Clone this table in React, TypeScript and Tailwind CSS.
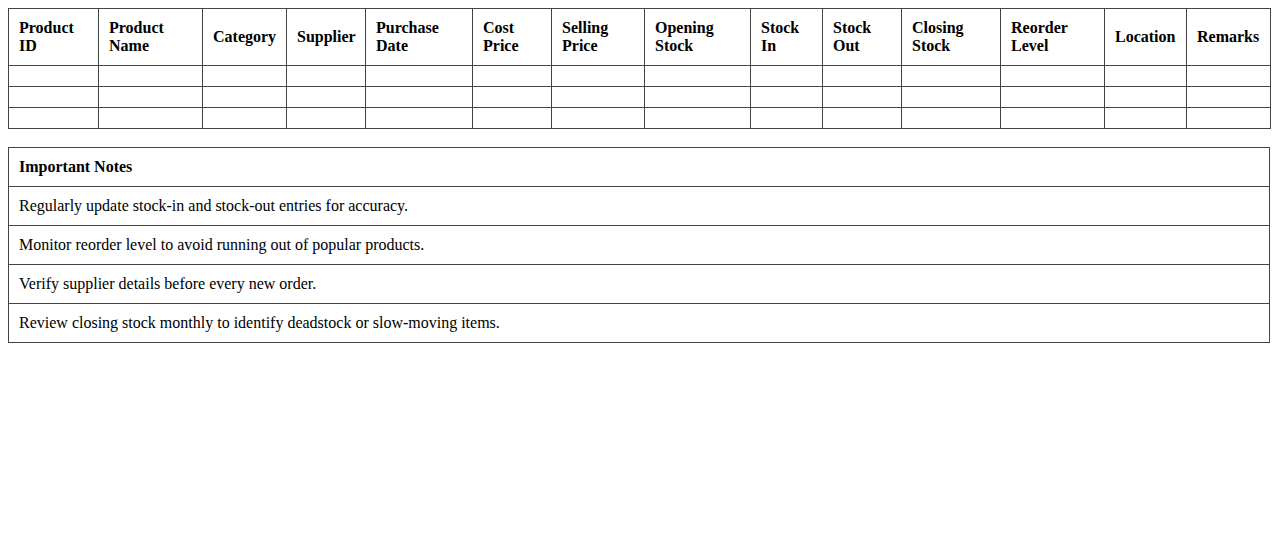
const headers = [
  { label: ["Product", "ID"], w: "w-[90px]" },
  { label: ["Product", "Name"], w: "w-[104px]" },
  { label: ["Category"], w: "w-[84px]" },
  { label: ["Supplier"], w: "w-[79px]" },
  { label: ["Purchase", "Date"], w: "w-[107px]" },
  { label: ["Cost", "Price"], w: "w-[79px]" },
  { label: ["Selling", "Price"], w: "w-[93px]" },
  { label: ["Opening", "Stock"], w: "w-[106px]" },
  { label: ["Stock", "In"], w: "w-[72px]" },
  { label: ["Stock", "Out"], w: "w-[79px]" },
  { label: ["Closing", "Stock"], w: "w-[99px]" },
  { label: ["Reorder", "Level"], w: "w-[104px]" },
  { label: ["Location"], w: "w-[82px]" },
  { label: ["Remarks"], w: "w-[84px]" },
];

const notes = [
  "Regularly update stock-in and stock-out entries for accuracy.",
  "Monitor reorder level to avoid running out of popular products.",
  "Verify supplier details before every new order.",
  "Review closing stock monthly to identify deadstock or slow-moving items.",
];

export default function App() {
  return (
    <div className="min-h-[550px] bg-white p-2 font-['Liberation_Serif','Times_New_Roman',serif] text-base leading-[18px] text-black">
      <table className="w-full table-fixed border-collapse">
        <colgroup>
          {headers.map((h, i) => (
            <col key={i} className={h.w} />
          ))}
        </colgroup>
        <thead>
          <tr>
            {headers.map((h, i) => (
              <th
                key={i}
                className="border border-[#444] p-[10px] text-left align-middle font-bold"
              >
                {h.label.map((line, j) => (
                  <span key={j} className="block">
                    {line}
                  </span>
                ))}
              </th>
            ))}
          </tr>
        </thead>
        <tbody>
          {[0, 1, 2].map((r) => (
            <tr key={r}>
              {headers.map((_, i) => (
                <td key={i} className="border border-[#444] p-[10px]"></td>
              ))}
            </tr>
          ))}
        </tbody>
      </table>

      <table className="mt-[18px] w-full border-collapse">
        <tbody>
          <tr>
            <td className="border border-[#444] p-[10px] font-bold">Important Notes</td>
          </tr>
          {notes.map((n, i) => (
            <tr key={i}>
              <td className="border border-[#444] p-[10px]">{n}</td>
            </tr>
          ))}
        </tbody>
      </table>
    </div>
  );
}
